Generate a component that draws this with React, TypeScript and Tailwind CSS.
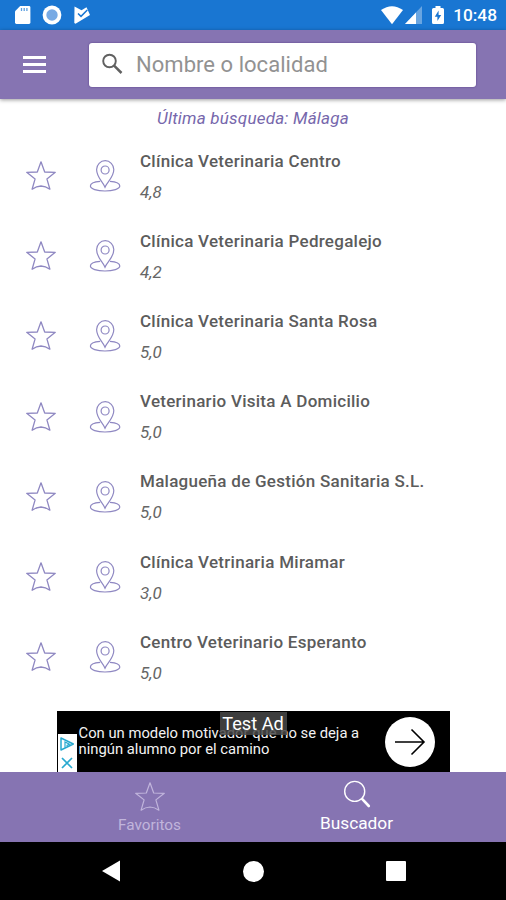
const clinics = [
  { name: 'Clínica Veterinaria Centro', score: '4,8' },
  { name: 'Clínica Veterinaria Pedregalejo', score: '4,2' },
  { name: 'Clínica Veterinaria Santa Rosa', score: '5,0' },
  { name: 'Veterinario Visita A Domicilio', score: '5,0' },
  { name: 'Malagueña de Gestión Sanitaria S.L.', score: '5,0' },
  { name: 'Clínica Vetrinaria Miramar', score: '3,0' },
  { name: 'Centro Veterinario Esperanto', score: '5,0' },
];

function Star({ className }: { className: string }) {
  return (
    <svg viewBox="0 0 32 32" className={className} fill="none" stroke="currentColor" strokeLinejoin="round">
      <path d="M16 1.8 L19.7 12 L30.3 12.3 L21.9 18.9 L24.9 29.2 Q20.5 26.1 16 26 Q11.5 26.1 7.1 29.2 L10.1 18.9 L1.7 12.3 L12.3 12 Z" />
    </svg>
  );
}

function Pin() {
  return (
    <svg viewBox="0 0 32 34" className="h-[34px] w-8 text-[#8f88c2]" fill="none" stroke="currentColor" strokeWidth="1.2">
      <path d="M16 28.2 C14 23 7.6 18.5 7.6 10.6 A8.6 8.9 0 0 1 24.8 10.6 C24.8 18.5 18 23 16 28.2 Z" />
      <circle cx="16.1" cy="11" r="4" />
      <path d="M11.2 22.4 C5.8 22.8 1.4 24.6 1.4 27.1 C1.4 30 8 32 16 32 S30.8 30 30.8 27.1 C30.8 24.6 26.4 22.8 21 22.4" />
    </svg>
  );
}

function StatusBar() {
  return (
    <div className="flex h-[30px] shrink-0 items-center bg-[#1976d2] pl-[14px] pr-[9px] text-white">
      <svg viewBox="0 0 17 20" className="h-5 w-[17px]">
        <path fill="currentColor" d="M6.2 1 H15 Q16.4 1 16.4 2.4 V17.6 Q16.4 19 15 19 H2.4 Q1 19 1 17.6 V6.3 Z" />
        <path stroke="#5c9fe0" strokeWidth="1.3" d="M7.5 3 V6 M10.2 3 V6 M12.9 3 V6" />
      </svg>
      <svg viewBox="0 0 20 20" className="ml-[11px] h-5 w-5">
        <circle cx="10" cy="10" r="9.4" fill="currentColor" />
        <circle cx="10" cy="10" r="5.7" fill="#78aae4" />
      </svg>
      <svg viewBox="0 0 18 20" className="ml-[11px] h-5 w-[18px]">
        <path fill="currentColor" d="M1.5 1.5 L8.5 5.3 L13.5 2.3 L17 10 L2.5 18.8 L1.3 18 Z" />
        <path fill="none" stroke="#1976d2" strokeWidth="1.5" d="M5 8.5 L8 11.4 L14.3 5" />
      </svg>
      <svg viewBox="0 0 24 20" className="ml-auto h-5 w-6">
        <path fill="currentColor" d="M1 5 Q12 -2.7 23 5 L12 19.2 Z" />
      </svg>
      <svg viewBox="0 0 19 20" className="h-5 w-[19px]">
        <path fill="#69a5e1" d="M18 1 V19 H1 Z" />
        <path fill="currentColor" d="M12 7.4 V19 H1 Z" />
      </svg>
      <svg viewBox="0 0 14 20" className="ml-[8px] h-5 w-[14px]">
        <path fill="currentColor" d="M4.5 1 H9.5 V3 H11.5 Q13 3 13 4.5 V17.5 Q13 19 11.5 19 H2.5 Q1 19 1 17.5 V4.5 Q1 3 2.5 3 H4.5 Z" />
        <path fill="#1976d2" d="M7.6 5.6 L3.8 11.7 H6.4 V16 L10.2 10 H7.6 Z" />
      </svg>
      <span className="ml-[8px] pt-[2px] text-[17.3px] font-medium leading-none">10:48</span>
    </div>
  );
}

function Header() {
  return (
    <header className="z-10 flex h-[69px] shrink-0 items-center bg-[#8674b2] shadow-[0_1px_4px_rgba(0,0,0,0.4)]">
      <div className="ml-[23px] flex w-[23px] flex-col gap-[4px]">
        <span className="h-[3px] bg-white" />
        <span className="h-[3px] bg-white" />
        <span className="h-[3px] bg-white" />
      </div>
      <div className="ml-[43px] flex h-11 w-[387px] items-center rounded-[3px] bg-white shadow-[0_0_2px_rgba(60,30,110,0.7)]">
        <svg viewBox="0 0 24 24" className="ml-[12px] h-6 w-6 text-[#606060]" fill="none" stroke="currentColor" strokeWidth="1.9">
          <circle cx="8.5" cy="8" r="6.3" />
          <path strokeWidth="2.5" d="M13.1 12.6 L20.5 20" />
        </svg>
        <span className="ml-[11px] whitespace-nowrap pt-[1px] text-[22px] leading-none tracking-[0.04px] text-[#929292]">
          Nombre o localidad
        </span>
      </div>
    </header>
  );
}

function AdBanner() {
  return (
    <div className="relative mx-auto flex h-[61px] w-[393px] shrink-0 bg-black">
      <div className="ml-px mt-[23px] flex h-[38px] w-[19px] flex-col items-center justify-around bg-white">
        <svg viewBox="0 0 16 16" className="h-4 w-4" fill="none" stroke="#27a9d0" strokeWidth="1.5">
          <path strokeLinejoin="round" d="M2 2 L14.3 8 L2 14 Z" />
          <path strokeWidth="1.2" d="M6 11.5 V6 L10.5 8.3 L7.5 9.6" />
        </svg>
        <svg viewBox="0 0 16 16" className="h-4 w-4" stroke="#27a9d0" strokeWidth="1.7">
          <path d="M3 3 L13 13 M13 3 L3 13" />
        </svg>
      </div>
      <p className="ml-[2px] mt-[14px] whitespace-nowrap text-[14.8px] leading-4 text-[#f2f2f2]">
        Con un modelo motivador que no se deja a
        <br />
        ningún alumno por el camino
      </p>
      <div className="absolute right-[15px] top-[6px] flex h-[50px] w-[50px] items-center justify-center rounded-full bg-white">
        <svg viewBox="0 0 32 28" className="h-7 w-8" fill="none" stroke="#000" strokeWidth="1.6">
          <path d="M1 14 H30 M17.5 1.5 L30 14 L17.5 26.5" />
        </svg>
      </div>
      <span className="absolute left-[163px] top-[1px] flex h-[23px] w-[67px] items-center justify-center whitespace-nowrap bg-[#484848]/85 pt-[2px] text-[18.2px] leading-none text-white">
        Test Ad
      </span>
    </div>
  );
}

export default function App() {
  return (
    <div className="flex h-[900px] w-[506px] flex-col overflow-hidden bg-white font-['Roboto','Liberation_Sans',sans-serif]">
      <StatusBar />
      <Header />
      <main className="flex flex-1 flex-col">
        <p className="mt-[9px] text-center text-[17px] italic leading-5 tracking-[0.22px] text-[#7667ac]">
          Última búsqueda: Málaga
        </p>
        <ul className="mt-[8px]">
          {clinics.map((clinic) => (
            <li key={clinic.name} className="flex h-[80.2px] items-center">
              <Star className="ml-[25px] h-8 w-8 stroke-[1.3] text-[#8f88c2]" />
              <span className="ml-[32px]">
                <Pin />
              </span>
              <div className="ml-[19px] flex flex-col gap-[11px] whitespace-nowrap">
                <span className="text-[17px] font-medium leading-5 tracking-[0.27px] text-[#5c5c5c]">{clinic.name}</span>
                <span className="text-[17px] italic leading-5 text-[#666]">{clinic.score}</span>
              </div>
            </li>
          ))}
        </ul>
      </main>
      <AdBanner />
      <nav className="flex h-[70px] shrink-0 justify-center bg-[#8674b2]">
        <div className="flex w-[207px] flex-col items-center text-[#c1b5dc]">
          <Star className="mt-[9px] h-8 w-8 stroke-[1.2]" />
          <span className="mt-[2px] text-[15.3px] leading-5">Favoritos</span>
        </div>
        <div className="flex w-[207px] flex-col items-center text-white">
          <svg viewBox="0 0 28 28" className="mt-[8px] h-7 w-7" fill="none" stroke="currentColor" strokeWidth="1.4">
            <circle cx="11.7" cy="11.4" r="10" />
            <path strokeWidth="2.6" strokeLinecap="round" d="M19.3 19.2 L25.8 26" />
          </svg>
          <span className="mt-[5px] text-[17.3px] leading-5">Buscador</span>
        </div>
      </nav>
      <footer className="flex h-[58px] shrink-0 items-center bg-black">
        <svg viewBox="0 0 18 22" className="ml-[102px] h-[22px] w-[18px]">
          <path fill="#fff" d="M18 0.5 V21.5 L0 11 Z" />
        </svg>
        <span className="ml-[123px] h-[21px] w-[21px] rounded-full bg-white" />
        <span className="ml-[122px] h-[20px] w-[20px] rounded-[1px] bg-white" />
      </footer>
    </div>
  );
}
